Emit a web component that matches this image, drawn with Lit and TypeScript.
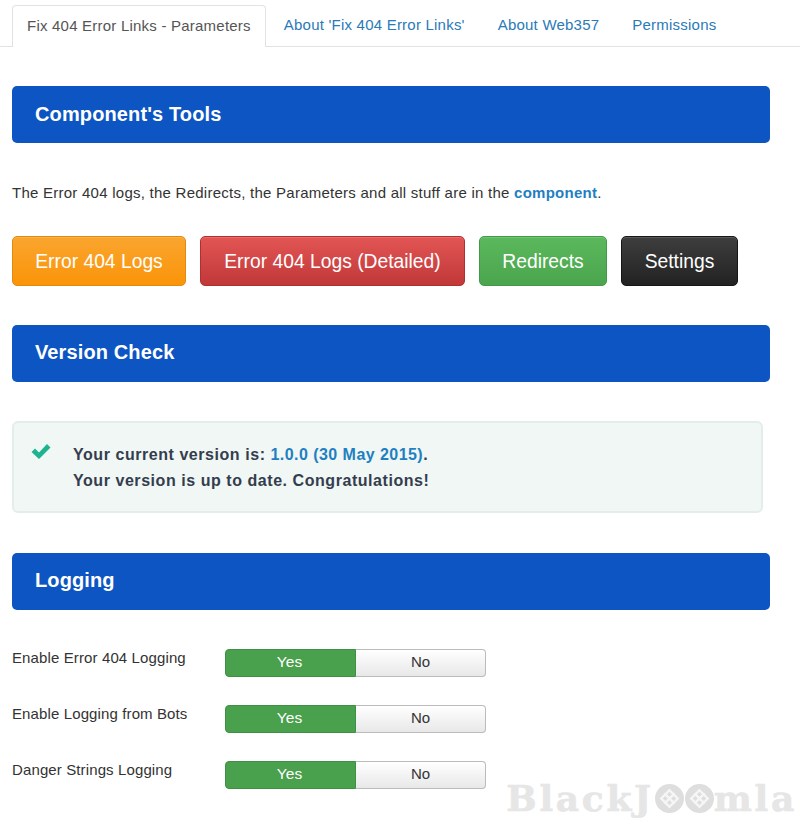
import { LitElement, html, css, svg } from "lit";
import { customElement } from "lit/decorators.js";

const joomla = svg`<svg class="jm" viewBox="0 0 28 28" aria-hidden="true"><circle cx="14" cy="14" r="14" fill="#dedede"/><path d="M9 9 L19 19 M19 9 L9 19 M14 6 L22 14 L14 22 L6 14 Z" fill="none" stroke="#f6f6f6" stroke-width="2.2"/></svg>`;

@customElement("app-root")
export class AppRoot extends LitElement {
  static styles = css`
    :host { display: block; position: relative; width: 800px; height: 818px; overflow: hidden; background: #fff; font-family: "Liberation Sans", Arial, sans-serif; color: #333; font-size: 15px; }
    .tabs { display: flex; padding: 5px 0 0 12px; height: 41px; border-bottom: 1px solid #e2e2e2; }
    .tab { padding: 0 15px; line-height: 40px; height: 42px; box-sizing: border-box; font-size: 15px; color: #2a7ab8; margin-right: 3px; letter-spacing: 0.22px; white-space: nowrap; }
    .tab.active { color: #555; background: #fff; border: 1px solid #e2e2e2; border-bottom: 0; border-radius: 4px 4px 0 0; margin-right: 3px; padding: 0 14px; }
    .bar { margin: 0 30px 0 12px; height: 57px; box-sizing: border-box; background: #0d55c2; border-radius: 5px; color: #fff; font-weight: 700; font-size: 20px; line-height: 55px; padding-left: 23px; letter-spacing: 0.12px; }
    .bar.first { margin-top: 39px; line-height: 56px; }
    p.intro { margin: 0; padding: 40px 0 0 12px; line-height: 19px; white-space: nowrap; letter-spacing: 0.25px; color: #333; height: 53px; }
    p.intro b { color: #1f7fc2; }
    .buttons { display: flex; gap: 14px; padding-left: 12px; margin-bottom: 39px; }
    .btn { height: 50px; box-sizing: border-box; border-radius: 5px; border: 1px solid; color: #fff; font-size: 19.3px; line-height: 49px; text-align: center; box-shadow: inset 0 1px 0 rgba(255,255,255,.15); }
    .orange { width: 174px; background: linear-gradient(#faa52f, #fb9408); border-color: #e08a10; }
    .red { width: 265px; background: linear-gradient(#e25555, #c13838); border-color: #b03030; }
    .green { width: 128px; background: linear-gradient(#5cb85c, #4aa54e); border-color: #429a48; }
    .dark { width: 117px; background: linear-gradient(#3e3e3e, #222); border-color: #161616; }
    .alert { display: flex; margin: 39px 37px 40px 12px; height: 92px; box-sizing: border-box; background: #f0f7f5; border: 2px solid #e3eeea; border-radius: 6px; padding: 19px 0 0 17px; font-weight: 700; font-size: 16px; line-height: 26px; color: #343d4e; letter-spacing: 0.55px; }
    .alert svg { width: 20px; height: 18px; margin-right: 22px; flex: none; margin-top: 0; }
    .alert b { color: #1f7fc2; letter-spacing: 0.45px; }
    .rows { display: grid; row-gap: 28px; padding: 39px 0 0 12px; }
    .row { display: flex; align-items: flex-start; height: 28px; }
    .label { width: 213px; font-size: 15px; line-height: 18px; color: #333; white-space: nowrap; letter-spacing: 0.12px; }
    .toggle { display: flex; width: 261px; height: 28px; font-size: 15px; line-height: 24px; text-align: center; }
    .yes { width: 131px; box-sizing: border-box; background: #49a04d; color: #fff; border-radius: 4px 0 0 4px; border: 1px solid #3f8f44; padding-right: 2px; font-size: 15.5px; }
    .no { flex: 1; box-sizing: border-box; background: linear-gradient(#fff, #e8e8e8); color: #333; border: 1px solid #bbb; border-left: 0; border-radius: 0 4px 4px 0; }
    .wm { position: absolute; right: 3px; top: 778px; display: flex; align-items: center; font-family: "DejaVu Serif", serif; font-weight: 700; font-size: 36px; line-height: 40px; color: #e6e6e6; letter-spacing: 2.7px; -webkit-text-stroke: 0.6px #e6e6e6; }
    .jm { width: 29px; height: 29px; margin-left: 1px; }
  `;

  private row(label: string) {
    return html`<div class="row"><div class="label">${label}</div><div class="toggle"><div class="yes">Yes</div><div class="no">No</div></div></div>`;
  }

  render() {
    return html`
      <div class="tabs">
        <div class="tab active">Fix 404 Error Links - Parameters</div>
        <div class="tab">About 'Fix 404 Error Links'</div>
        <div class="tab">About Web357</div>
        <div class="tab">Permissions</div>
      </div>
      <div class="bar first">Component's Tools</div>
      <p class="intro">The Error 404 logs, the Redirects, the Parameters and all stuff are in the <b>component</b>.</p>
      <div class="buttons">
        <div class="btn orange">Error 404 Logs</div>
        <div class="btn red">Error 404 Logs (Detailed)</div>
        <div class="btn green">Redirects</div>
        <div class="btn dark">Settings</div>
      </div>
      <div class="bar">Version Check</div>
      <div class="alert">
        <svg viewBox="0 0 20 18" aria-hidden="true"><path d="M0.5 10 L4 6.5 L8 10.5 L16 2 L19.5 5.5 L8 17 Z" fill="#1fb38f"/></svg>
        <div>Your current version is: <b>1.0.0 (30 May 2015)</b>.<br />Your version is up to date. Congratulations!</div>
      </div>
      <div class="bar">Logging</div>
      <div class="rows">
        ${this.row("Enable Error 404 Logging")}
        ${this.row("Enable Logging from Bots")}
        ${this.row("Danger Strings Logging")}
      </div>
      <div class="wm">BlackJ${joomla}${joomla}mla</div>
    `;
  }
}
